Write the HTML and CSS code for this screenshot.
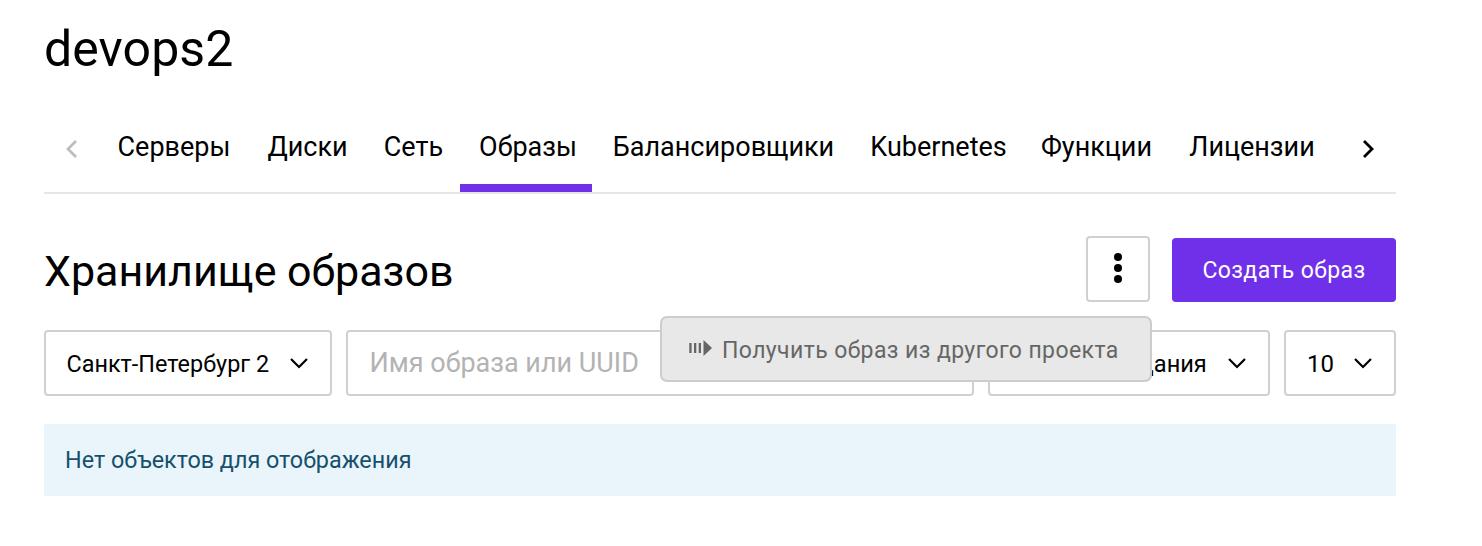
FILE: index.html
```html
<!DOCTYPE html>
<html lang="ru">
<head>
<meta charset="utf-8">
<title>devops2</title>
<link rel="stylesheet" href="styles.css">
</head>
<body>
<main class="page">
  <h1 class="title">devops2</h1>
  <nav class="tabs">
    <svg class="prev" width="12" height="20" viewBox="0 0 12 20"><path d="M11 2 3 10l8 8"/></svg>
    <a class="tab t1"><span>Серверы</span></a>
    <a class="tab t2"><span>Диски</span></a>
    <a class="tab t3"><span>Сеть</span></a>
    <a class="tab t4 active"><span>Образы</span></a>
    <a class="tab t5"><span>Балансировщики</span></a>
    <a class="tab t6"><span>Kubernetes</span></a>
    <a class="tab t7"><span>Функции</span></a>
    <a class="tab t8"><span>Лицензии</span></a>
    <svg class="next" width="12" height="20" viewBox="0 0 12 20"><path d="m2 2 8 8-8 8"/></svg>
  </nav>
  <header class="head">
    <h2 class="subtitle">Хранилище образов</h2>
    <div class="more">
      <svg class="dots" width="10" height="32" viewBox="0 0 10 32"><circle cx="5" cy="5" r="4"/><circle cx="5" cy="16" r="4"/><circle cx="5" cy="27" r="4"/></svg>
      <div class="menu">
        <svg width="24" height="18" viewBox="0 0 24 18"><path d="M.3 4h2.300v10H.3zM5 4h2.300v10H5zM9.700 4H12v10H9.700zM14.500 1l8.500 8-8.500 8z"/></svg>
        <span class="menu-text">Получить образ из другого проекта</span>
      </div>
    </div>
    <button class="create"><span>Создать образ</span></button>
  </header>
  <section class="filters">
    <div class="box region"><span>Санкт-Петербург 2</span><svg class="chev" width="18" height="12" viewBox="0 0 18 12"><path d="m1 2 8 8 8-8"/></svg></div>
    <div class="box search"><span>Имя образа или UUID</span></div>
    <div class="box sort"><span>Дата создания</span><svg class="chev" width="18" height="12" viewBox="0 0 18 12"><path d="m1 2 8 8 8-8"/></svg></div>
    <div class="box count"><span>10</span><svg class="chev" width="18" height="12" viewBox="0 0 18 12"><path d="m1 2 8 8 8-8"/></svg></div>
  </section>
  <div class="empty"><span>Нет объектов для отображения</span></div>
</main>
</body>
</html>
```
FILE: styles.css
```css
* { box-sizing: border-box; }
body { margin: 0; background: #fff; color: #000; font-family: Roboto, sans-serif; }
.page { width: 1396px; padding: 18px 0 0 44px; }
.title { margin: 0; height: 84px; font-size: 50px; line-height: 62px; font-weight: 400; letter-spacing: .1px; }
.tabs { display: grid; grid-template-columns: 56px 148px 119px 93px 132px 263px 167px 149px 162px 1fr; height: 92px; border-bottom: 2px solid #e6e6e6; align-items: stretch; }
.tabs svg { fill: none; stroke: #000; stroke-width: 2.800; align-self: center; margin-top: 4px; }
.tabs .prev { stroke: #bdbdbd; margin-left: 21px; }
.tabs .next { margin-left: 29px; }
.tab { font-size: 27px; line-height: 32px; padding-top: 29px; white-space: nowrap; text-align: center; }
.tab.active { border-bottom: 8px solid #702fe8; padding-left: 4px; }
.head { display: flex; align-items: center; height: 66px; margin-top: 42px; }
.subtitle { flex: 1; margin: 4px 0 0; font-size: 43px; line-height: 56px; font-weight: 400; }
.more { position: relative; width: 64px; height: 66px; border: 2px solid #d0d0d0; border-radius: 4px; display: flex; align-items: center; justify-content: center; }
.dots { margin-bottom: 2px; }
.menu { position: absolute; z-index: 2; top: 78px; right: -4px; width: 492px; height: 66px; border: 2px solid #ccc; border-radius: 7px; background: #e8e8e8; color: #666; display: flex; align-items: center; padding-left: 27px; gap: 9px; font-size: 23px; letter-spacing: .4px; white-space: nowrap; }
.menu svg { fill: #666; margin-bottom: 2px; }
.menu-text { padding-top: 2px; }
.create { width: 224px; height: 64px; margin: 2px 0 0 22px; padding: 0; border: 0; border-radius: 4px; background: #702fe8; color: #fff; font: 23px Roboto, sans-serif; letter-spacing: .4px; }
.filters { display: grid; grid-template-columns: 288px 628px 282px 112px; gap: 14px; margin-top: 28px; }
.box { height: 66px; border: 2px solid #d0d0d0; border-radius: 4px; padding: 0 22px 0 20.500px; display: flex; align-items: center; justify-content: space-between; font-size: 23.400px; white-space: nowrap; }
.box span { padding-top: 2px; }
.search { color: #b3b3b3; font-size: 27px; padding-left: 21.500px; }
.search span { padding-top: 0; }
.sort { justify-content: flex-end; gap: 21.200px; font-size: 23.600px; }
.count { font-size: 24px; padding-left: 21px; }
.chev { fill: none; stroke: #000; stroke-width: 2.200; }
.empty { height: 72px; margin-top: 28px; padding-left: 21px; background: #eaf5fb; color: #16506c; font-size: 23.350px; line-height: 72px; }
```
